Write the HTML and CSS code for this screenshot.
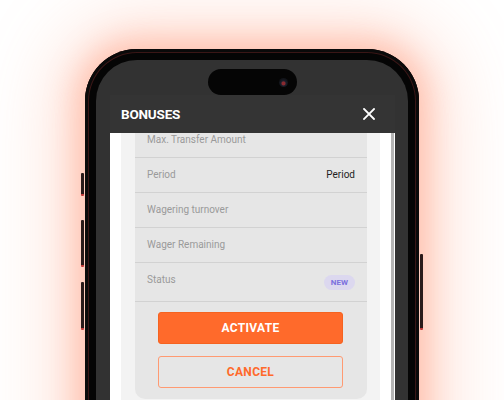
FILE: index.html
```html
<!DOCTYPE html>
<html lang="en">
<head>
<meta charset="utf-8">
<title>Bonuses</title>
<link rel="stylesheet" href="styles.css">
</head>
<body>
<div class="stage">
  <div class="phone">
    <span class="side-btn side-l1"></span>
    <span class="side-btn side-l2"></span>
    <span class="side-btn side-l3"></span>
    <span class="side-btn side-r1"></span>
    <div class="screen">
      <div class="island"><span class="cam"></span></div>
      <div class="modal">
        <div class="modal-head">
          <h1 class="modal-title">BONUSES</h1>
          <svg class="close" viewBox="0 0 12 12" width="12" height="12" aria-label="Close">
            <path d="M1 1 L11 11 M11 1 L1 11" stroke="#fff" stroke-width="1.8" stroke-linecap="square" fill="none"/>
          </svg>
        </div>
        <div class="modal-body">
          <div class="content">
            <div class="card">
              <div class="row"><span class="label">Max. Transfer Amount</span></div>
              <div class="row"><span class="label">Period</span><span class="value">Period</span></div>
              <div class="row"><span class="label">Wagering turnover</span></div>
              <div class="row"><span class="label">Wager Remaining</span></div>
              <div class="row row-status"><span class="label">Status</span><span class="badge">NEW</span></div>
              <div class="actions">
                <button class="btn btn-primary">ACTIVATE</button>
                <button class="btn btn-outline">CANCEL</button>
              </div>
            </div>
          </div>
          <div class="scrollbar"></div>
        </div>
      </div>
    </div>
  </div>
</div>
</body>
</html>
```

FILE: styles.css
```css
* { box-sizing: border-box; }
html, body {
  margin: 0;
  padding: 0;
  width: 504px;
  height: 400px;
  overflow: hidden;
  background: #fff;
  font-family: Roboto, "Liberation Sans", Arial, sans-serif;
}
.stage {
  width: 504px;
  height: 400px;
  overflow: hidden;
  padding-top: 49px;
}
.phone {
  position: relative;
  width: 334px;
  height: 420px;
  margin: 0 auto;
  padding: 11px 11px 0;
  background: #050505;
  border-radius: 52px 52px 0 0;
  box-shadow: inset 0 0 0 3px #0a0a0a, inset 0 0 0 4px #3a1616,
              0 0 30px 10px rgba(255, 135, 100, 0.38),
              0 0 75px 30px rgba(255, 150, 115, 0.28);
}
.side-btn {
  position: absolute;
  width: 3px;
  background: #2a1a1a;
  border-radius: 1px;
  border-bottom: 2px solid #c23a3a;
}
.side-l1 { left: -4px; top: 124px; height: 23px; }
.side-l2 { left: -4px; top: 171px; height: 47px; }
.side-l3 { left: -4px; top: 233px; height: 48px; }
.side-r1 { right: -4px; top: 205px; height: 76px; }
.screen {
  width: 312px;
  height: 420px;
  background: #323232;
  border-radius: 41px 41px 0 0;
  overflow: hidden;
  padding-top: 9px;
}
.island {
  position: relative;
  width: 89px;
  height: 26px;
  margin: 0 auto;
  background: #050505;
  border-radius: 13px;
}
.cam {
  position: absolute;
  left: 71px;
  top: 9px;
  width: 9px;
  height: 9px;
  border-radius: 50%;
  background: radial-gradient(circle at 50% 60%, #8a2a30 0 1.5px, #1c1f2c 2.5px, #111318 4.5px);
}
.modal {
  margin: 0 13px 0 14px;
  width: 285px;
}
.modal-head {
  height: 38px;
  background: #343434;
  display: flex;
  align-items: center;
  justify-content: space-between;
  padding: 0 20px 0 11px;
}
.modal-title {
  margin: 0;
  color: #fff;
  font-size: 13.5px;
  font-weight: 700;
  letter-spacing: -0.2px;
}
.close { display: block; }
.modal-body {
  display: flex;
  background: #fff;
  height: 280px;
  padding-left: 11px;
}
.content {
  width: 259px;
  background: #f3f3f3;
  padding: 0 13px 0 14px;
  overflow: hidden;
}
.scrollbar {
  margin-left: 11px;
  width: 3px;
  background: #b4b4b4;
}
.card {
  margin-top: -10px;
  background: #e6e6e6;
  border-radius: 0 0 10px 10px;
}
.row {
  height: 35px;
  display: flex;
  align-items: center;
  justify-content: space-between;
  padding: 0 12px;
  border-bottom: 1px solid #d2d2d2;
}
.row-status {
  height: 39px;
  align-items: flex-start;
  padding-top: 11px;
}
.label {
  font-size: 10px;
  line-height: 12px;
  color: #9a9a9a;
}
.value {
  font-size: 10px;
  line-height: 12px;
  color: #1e1e1e;
}
.badge {
  margin-top: 1px;
  height: 15px;
  padding: 0 7px;
  border-radius: 8px;
  background: #dcd8ef;
  color: #7b70de;
  font-size: 8px;
  font-weight: 700;
  line-height: 15px;
}
.actions {
  display: flex;
  flex-direction: column;
  gap: 12px;
  padding: 10px 24px 11px 23px;
}
.btn {
  height: 32px;
  border-radius: 3px;
  font-family: Roboto, "Liberation Sans", Arial, sans-serif;
  font-size: 12px;
  font-weight: 700;
  letter-spacing: 0.3px;
  cursor: pointer;
}
.btn-primary {
  background: #ff6a2b;
  border: 1px solid #f56320;
  color: #fff;
}
.btn-outline {
  background: transparent;
  border: 1px solid #ff9a72;
  color: #ff6a2b;
}
```
